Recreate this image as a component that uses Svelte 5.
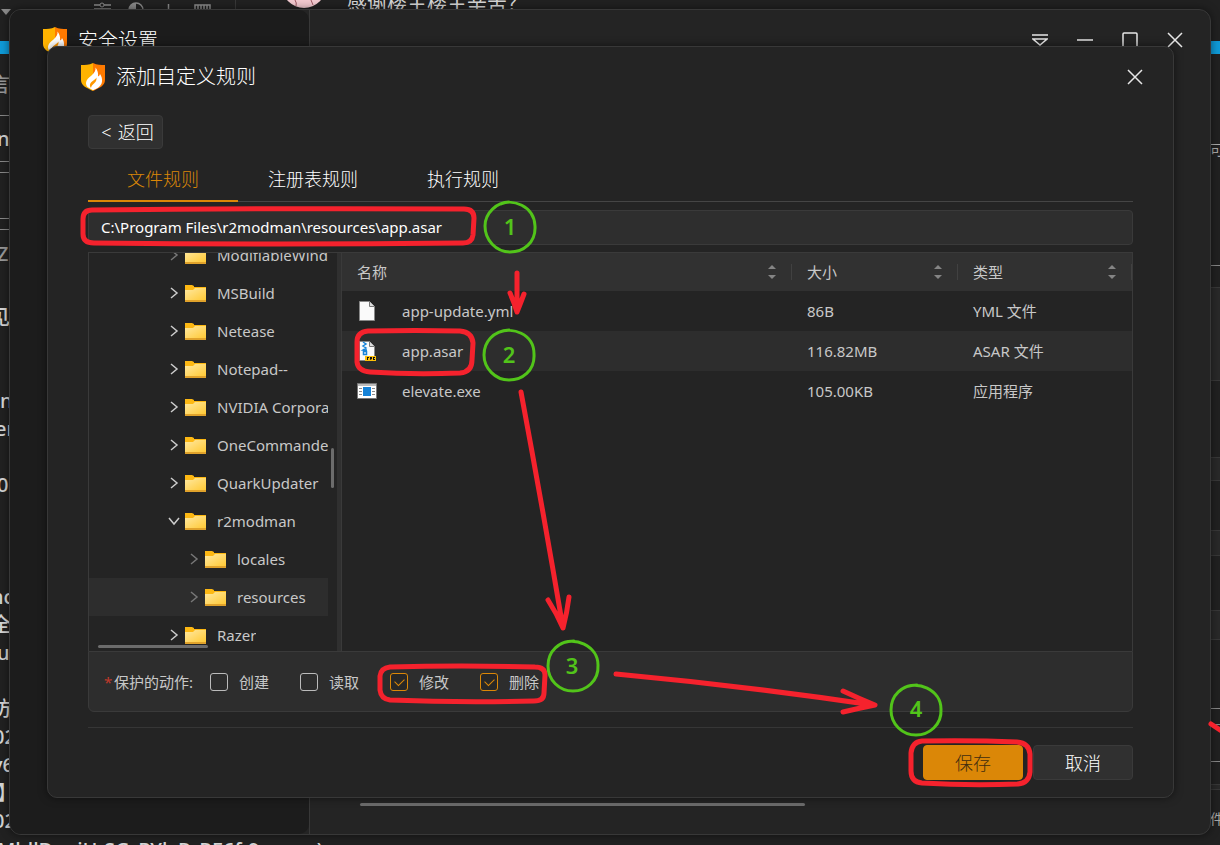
<script lang="ts">
	import { onMount } from 'svelte';

	type TreeNode = { name: string; depth: number; open?: boolean; leaf?: boolean; selected?: boolean };
	type FileRow = { name: string; size: string; type: string; icon: 'file' | 'archive' | 'exe' };

	const tabs = ['文件规则', '注册表规则', '执行规则'];
	const tree: TreeNode[] = [
		{ name: 'ModifiableWindowsApps', depth: 0, leaf: true },
		{ name: 'MSBuild', depth: 0 },
		{ name: 'Netease', depth: 0 },
		{ name: 'Notepad--', depth: 0 },
		{ name: 'NVIDIA Corporation', depth: 0 },
		{ name: 'OneCommander', depth: 0 },
		{ name: 'QuarkUpdater', depth: 0 },
		{ name: 'r2modman', depth: 0, open: true },
		{ name: 'locales', depth: 1, leaf: true },
		{ name: 'resources', depth: 1, leaf: true, selected: true },
		{ name: 'Razer', depth: 0 }
	];
	const columns = ['名称', '大小', '类型'];
	const files: FileRow[] = [
		{ name: 'app-update.yml', size: '86B', type: 'YML 文件', icon: 'file' },
		{ name: 'app.asar', size: '116.82MB', type: 'ASAR 文件', icon: 'archive' },
		{ name: 'elevate.exe', size: '105.00KB', type: '应用程序', icon: 'exe' }
	];

	const leftBits = [
		{ text: '言', y: 85, x: -10, dim: true },
		{ text: 'nu', y: 139, x: -3 },
		{ text: 'Z', y: 254, x: -3, dim: true },
		{ text: '见', y: 318, x: -10 },
		{ text: 'n', y: 401, x: 0 },
		{ text: 'er', y: 429, x: -5 },
		{ text: '0', y: 485, x: -3 },
		{ text: 'nc', y: 597, x: -9 },
		{ text: '全', y: 625, x: -9 },
		{ text: 'u', y: 653, x: -3 },
		{ text: '防', y: 709, x: -9 },
		{ text: '02', y: 737, x: -7 },
		{ text: 'v6', y: 765, x: -8 },
		{ text: '】', y: 793, x: -3 },
		{ text: '02', y: 821, x: -7 }
	];
	const leftLines = [115, 161, 172, 218, 229];
	const rightLines = [265, 708, 724, 761];
	const rightPanels = [
		{ y: 287, h: 94 },
		{ y: 457, h: 24 },
		{ y: 530, h: 26 },
		{ y: 610, h: 30 },
		{ y: 784, h: 6 }
	];

	let activeTab = $state(0);
	let path = $state('C:\\Program Files\\r2modman\\resources\\app.asar');
	let selectedFile = $state('app.asar');
	let actions = $state([
		{ label: '创建', checked: false },
		{ label: '读取', checked: false },
		{ label: '修改', checked: true },
		{ label: '删除', checked: true }
	]);
	let treeEl: HTMLElement;

	onMount(() => {
		treeEl.scrollTop = 17;
	});
</script>

{#snippet logo()}
	<svg class="logo" viewBox="0 0 24 28" aria-hidden="true">
		<path fill="#ffb300" d="M12 0C8 2 4 2 0 2v15c0 6 6 8 12 11Z" />
		<path fill="#ff7a00" d="M12 0c4 2 8 2 12 2v15c0 6-6 8-12 11Z" />
		<path fill="#fff" d="M14.500 4.500c.5 3-1 5-4 8-3 2.500-5.500 4.500-5.500 7.500 0 1.500.5 3 1.500 4l5.500 3.200c4.500-1.800 8.500-4 9-8.700.4-3-.5-5-2-7.500-.5 1.500-1 2-2 2.500.5-3.500-.5-6.500-2.500-9Z" />
		<path fill="#ff9800" d="M15.500 14.500c-1.500 3-5.500 3.500-6.500 7-.3 1.500.3 2.500 1 3.500.2-2 1.500-3 3-4.500 1.800-1.500 2.800-3.500 2.500-6Z" />
	</svg>
{/snippet}

{#snippet cross()}
	<svg class="ctl" viewBox="0 0 16 16" aria-hidden="true"><path d="M1 1l14 14M15 1L1 15" /></svg>
{/snippet}

<div class="desktop">
	<div class="backdrop" aria-hidden="true">
		<svg class="top-icons" width="330" height="20" viewBox="0 0 330 20">
			<path fill="#8a8a8a" d="M1 9h10l-5 6Z" />
			<path stroke="#8a8a8a" stroke-width="1.500" fill="none" d="M94 5h6m4 0h7M94 9h17" />
			<circle cx="102" cy="5" r="2" fill="none" stroke="#8a8a8a" />
			<circle cx="136" cy="10" r="7" fill="none" stroke="#8a8a8a" stroke-width="1.500" />
			<path fill="#8a8a8a" d="M136 3a7 7 0 0 0 0 14Z" />
			<path stroke="#8a8a8a" stroke-width="1.500" d="M168.500 4v8" />
			<path stroke="#8a8a8a" stroke-width="1.500" fill="none" d="M195 10V5h15v5M198 5v4m3-4v4m3-4v4m3-4v4" />
			<path stroke="#383838" d="M235.500 0v10" />
			<circle cx="304" cy="-14" r="22" fill="#f2c9cf" />
			<path stroke="#9c5560" fill="none" d="M295 0q2 3 1 6M311 0l2 5" />
		</svg>
		<span class="bit top-text">感谢楼主楼主辛苦？</span>
		<span class="bar left"></span>
		<span class="bar right"></span>
		{#each leftBits as bit}
			<span class="bit" class:dim={bit.dim} style="left: {bit.x}px; top: {bit.y - 14}px">{bit.text}</span>
		{/each}
		{#each leftLines as y}
			<span class="line left" style="top: {y}px"></span>
		{/each}
		{#each rightLines as y}
			<span class="line right" style="top: {y}px"></span>
		{/each}
		{#each rightPanels as panel}
			<span class="panel" style="top: {panel.y}px; height: {panel.h}px"></span>
		{/each}
		<span class="bit small" style="top: 136px">可选</span>
		<span class="bit small" style="top: 805px">件</span>
		<span class="bit bottom-text">MldlDauiH-SG_PYlyR_RE6f-9gwwn)</span>
	</div>

	<section class="window" aria-label="安全设置">
		<aside class="sidebar">
			<div class="brand">{@render logo()}<span>安全设置</span></div>
		</aside>
		<div class="window-main">
			<div class="window-controls">
				<button type="button" aria-label="菜单">
					<svg class="ctl" viewBox="0 0 16 16" aria-hidden="true"><path d="M0 3h16M1 7h14l-7 6Z" /></svg>
				</button>
				<button type="button" aria-label="最小化">
					<svg class="ctl" viewBox="0 0 16 16" aria-hidden="true"><path d="M0 8h16" /></svg>
				</button>
				<button type="button" aria-label="最大化">
					<svg class="ctl" viewBox="0 0 16 16" aria-hidden="true"><rect x="1" y="1" width="14" height="14" rx="1" /></svg>
				</button>
				<button type="button" aria-label="关闭">{@render cross()}</button>
			</div>
			<div class="window-scroll"></div>
		</div>
	</section>

	<div class="dialog" role="dialog" aria-labelledby="dialog-title">
		<header class="dialog-head">
			{@render logo()}
			<h1 id="dialog-title">添加自定义规则</h1>
			<button type="button" class="close" aria-label="关闭">{@render cross()}</button>
		</header>

		<div class="dialog-body">
			<button type="button" class="btn back"><span>&lt;</span><span>返回</span></button>

			<div class="tabs" role="tablist">
				{#each tabs as tab, i}
					<button type="button" role="tab" class:active={i === activeTab} aria-selected={i === activeTab} onclick={() => (activeTab = i)}>
						{tab}
					</button>
				{/each}
			</div>

			<input class="path" type="text" aria-label="路径" spellcheck="false" bind:value={path} />

			<div class="browser">
				<div class="tree-pane">
					<ul class="tree" bind:this={treeEl}>
						{#each tree as node}
							<li class:selected={node.selected} class:leaf={node.leaf} style="padding-left: {77 + node.depth * 20}px">
								<svg class="caret" viewBox="0 0 16 16" aria-hidden="true">
									<path d={node.open ? 'M3 5l5 6 5-6' : 'M5 3l6 5-6 5'} />
								</svg>
								<svg class="folder" viewBox="0 0 21 17" aria-hidden="true">
									<path fill="#fdb813" d="M0 0h7l2 1v1h12v4H0Z" />
									<path fill="url(#folder-face)" d="M0 5h8l2-2h11v12H0Z" />
									<path fill="#e0a22b" d="M0 15h21v2H0Z" />
								</svg>
								<span class="node-name">{node.name}</span>
							</li>
						{/each}
					</ul>
					<i class="thumb-y"></i>
					<i class="thumb-x"></i>
				</div>
				<div class="splitter"></div>
				<div class="list-pane">
					<table>
						<thead>
							<tr>
								{#each columns as column}
									<th scope="col">
										<div class="th">
											{column}
											<svg class="sort" viewBox="0 0 8 14" aria-hidden="true"><path d="M0 4l4-4 4 4ZM0 10l4 4 4-4Z" /></svg>
										</div>
									</th>
								{/each}
							</tr>
						</thead>
						<tbody>
							{#each files as file}
								<tr class:selected={file.name === selectedFile} onclick={() => (selectedFile = file.name)}>
									<td>
										<div class="name">
											<svg class="file-icon" viewBox="0 0 20 20" aria-hidden="true">
												{#if file.icon === 'exe'}
													<path fill="#fff" stroke="#777" d="M.5 2.500h19v15H.5Z" />
													<path fill="#bbb" d="M1 3h18v2H1Z" />
													<path fill="#1683d8" d="M6 6h8v9H6Z" />
													<path stroke="#8a8a8a" d="M2 7.500h3m-3 3h3m-3 3h3m10-6h3m-3 3h3m-3 3h3" />
												{:else}
													<path fill="#fafafa" stroke="#888" d="M2.500.5h10l5 5v14h-15Z" />
													<path fill="#ddd" stroke="#777" d="M12.500.5v5h5" />
												{/if}
												{#if file.icon === 'archive'}
													<path stroke="#1683d8" fill="none" stroke-width="1.500" d="M6 1l3 2-3 2 3 2-3 2h4M6.500 10.500h3v3h-3Z" />
													<path fill="#ffc107" d="M8 15h11v5H8Z" />
													<path fill="#111" d="M10 16h2v1h-1v2h-1ZM13 16h2v2l-2 1ZM16 16h2v1h-1v1h1v1h-2Z" />
												{/if}
											</svg>
											{file.name}
										</div>
									</td>
									<td>{file.size}</td>
									<td>{file.type}</td>
								</tr>
							{/each}
						</tbody>
					</table>
				</div>
			</div>

			<div class="actions">
				<span class="star">*</span>
				<span class="actions-label">保护的动作:</span>
				{#each actions as action}
					<label>
						<input type="checkbox" bind:checked={action.checked} />
						{action.label}
					</label>
				{/each}
			</div>

			<footer>
				<button type="button" class="btn primary">保存</button>
				<button type="button" class="btn">取消</button>
			</footer>
		</div>
	</div>

	<svg class="notes" width="1220" height="845" viewBox="0 0 1220 845" aria-hidden="true">
		<defs>
			<linearGradient id="folder-face" x1="0" y1="0" x2="1" y2="1">
				<stop offset="0" stop-color="#ffe9a2" />
				<stop offset="1" stop-color="#ffc935" />
			</linearGradient>
		</defs>
		<g class="red">
			<path d="M92 210Q280 208 464 209q10 0 10 9l-1 17q-1 8-10 8Q280 245 94 243q-11 0-11-9v-15q0-9 9-9Z" />
			<path d="M368 331q48-1 92 0 12 1 13 12l-1 17q0 12-12 13-46 2-90-1-12-1-13-10v-20q0-10 11-11Z" />
			<path d="M390 667q70-2 145 0 10 0 10 8l-1 18q0 8-10 8-72 2-144-1-9-1-10-10v-14q1-8 10-9Z" />
			<path d="M922 741q50-1 95 1 12 1 13 12v18q-1 11-12 12-48 2-96-1-11-1-11-12v-18q1-11 11-12Z" />
			<path d="M517 273v37M510 293q4 9 7 19 4-10 7-18" />
			<path d="M521 392q22 118 42 236M548 600q9 14 15 28 4-15 6-31" />
			<path d="M616 674Q745 686 873 705M843 691q17 8 32 14-15 3-32 7" />
			<path d="M1211 724l9 6" />
		</g>
		<g class="green">
			<path d="M501 204C512 199 534 205 535 226C536 243 523 252 510 252C496 252 485 240 485 226C485 213 497 202 509 202" />
			<path d="M500 332C511 327 534 333 534 354C535 371 522 380 509 380C495 380 484 368 484 355C484 342 493 331 509 330" />
			<path d="M559 645C574 635 598 646 598 665C599 681 586 691 573 691C559 691 548 680 548 666C548 651 559 641 574 641" />
			<path d="M902 689C917 679 941 690 941 709C942 725 929 735 916 735C902 735 891 724 891 710C891 695 902 685 917 685" />
		</g>
		<g class="digits">
			<text x="510" y="235">1</text>
			<text x="509" y="363">2</text>
			<text x="572" y="674">3</text>
			<text x="916" y="717">4</text>
		</g>
	</svg>
</div>

<style>
	:global(body) { background: #212121; }
	.desktop { position: relative; height: 100vh; overflow: hidden; background: #212121; color: #c8c8c8; font: 15px/20px 'Noto Sans', 'Noto Sans CJK SC', sans-serif; }
	.desktop * { box-sizing: border-box; }
	button { font: inherit; color: inherit; cursor: pointer; }
	svg { flex: none; display: block; }

	.backdrop { position: absolute; inset: 0; overflow: hidden; }
	.backdrop > * { position: absolute; }
	.top-icons { top: 0; left: 0; }
	.bit { font-size: 20px; font-weight: 500; line-height: 28px; color: #d5d5d5; white-space: nowrap; }
	.bit.dim { color: #999; }
	.bit.small { right: -16px; width: 26px; overflow: hidden; font-size: 14px; font-weight: 400; color: #aaa; }
	.top-text { left: 347px; top: -10px; font-weight: 400; }
	.bottom-text { left: -3px; bottom: -19px; }
	.bar { top: 41px; width: 12px; height: 13px; background: #0f9bd8; }
	.line { width: 12px; height: 1px; background: #888; }
	.panel { right: 0; width: 12px; background: #292929; border: solid #383838; border-width: 1px 0; }
	.left { left: 0; }
	.right { right: 0; }

	.window { position: absolute; inset: 9px 9px 10px 9px; display: flex; background: #242424; border: 1px solid #383838; border-radius: 12px; box-shadow: 0 0 8px rgba(0, 0, 0, 0.5); overflow: hidden; }
	.sidebar { width: 299px; flex: none; background: #1c1c1c; border-radius: 0 10px 10px 0; }
	.brand { display: flex; align-items: center; gap: 11px; height: 62px; padding-left: 33px; font-size: 20px; color: #fff; }
	.logo { width: 24px; height: 28px; }
	.window-main { flex: 1; display: flex; flex-direction: column; justify-content: space-between; border-left: 1px solid #383838; }
	.window-controls { display: flex; justify-content: flex-end; gap: 13px; padding: 14px 19px 0; }
	.window-controls button, .close { display: grid; place-items: center; width: 32px; height: 32px; padding: 0; border: 0; background: none; }
	.ctl { width: 16px; height: 16px; fill: none; stroke: #e6e6e6; stroke-width: 1.500; }
	.window-scroll { width: 445px; height: 3px; margin: 0 0 28px 50px; border-radius: 2px; background: #6c6c6c; }

	.dialog { position: absolute; inset: 46px 46px 47px 47px; display: flex; flex-direction: column; background: #242424; border: 1px solid #383838; border-radius: 10px; box-shadow: 0 0 8px rgba(0, 0, 0, 0.5); }
	.dialog-head { display: flex; align-items: center; gap: 11px; height: 60px; padding: 0 22px 0 33px; }
	.dialog-head h1 { flex: 1; margin: 0; font-size: 20px; font-weight: 300; line-height: 28px; color: #fff; }
	.brand { font-weight: 300; }
	.dialog-body { flex: 1; display: flex; flex-direction: column; min-height: 0; padding: 8px 40px 17px; }

	.btn { width: 100px; height: 35px; padding: 0; border: 1px solid #3a3a3a; border-radius: 4px; background: #303030; color: #fff; font-size: 18px; font-weight: 300; line-height: 24px; }
	.btn.primary { border-color: #db8707; background: #db8707; color: #3f2c10; }
	.btn.back { flex: none; display: flex; align-items: center; justify-content: center; gap: 6px; width: 75px; height: 34px; padding-left: 4px; }

	.tabs { flex: none; display: flex; height: 53px; border-bottom: 1px solid #454545; }
	.tabs button { width: 150px; height: 53px; padding: 8px 0 0; border: 0; border-bottom: 2px solid transparent; background: none; color: #fff; font-size: 18px; font-weight: 300; }
	.tabs button.active { border-color: #db8707; color: #db8707; }
	.path { flex: none; width: 100%; height: 35px; margin: 8px 0 7px; padding: 0 12px 2px; border: 1px solid #3a3a3a; border-radius: 4px; outline: 0; background: #2e2e2e; color: #fff; font: inherit; }

	.browser { flex: 1; display: flex; min-height: 0; border: solid #3a3a3a; border-width: 1px 1px 0; }
	.tree-pane { position: relative; width: 248px; padding-right: 9px; overflow: hidden; }
	.tree { height: 100%; margin: 0; padding: 0; overflow: hidden; list-style: none; }
	.tree li { display: flex; align-items: center; height: 38px; white-space: nowrap; overflow: hidden; }
	.tree li.selected { background: #2d2d2d; }
	.node-name { min-width: 0; overflow: hidden; }
	.caret { width: 16px; height: 16px; fill: none; stroke: #ccc; stroke-width: 1.500; }
	.leaf .caret { stroke: #777; }
	.folder { width: 21px; height: 17px; margin: 0 11px 0 3px; }
	.thumb-y, .thumb-x { position: absolute; border-radius: 2px; background: #6c6c6c; }
	.thumb-y { right: 3px; top: 195px; width: 3px; height: 40px; }
	.thumb-x { left: 9px; bottom: 3px; width: 110px; height: 3px; }
	.splitter { width: 5px; background: #303030; border-right: 1px solid #3a3a3a; }

	.list-pane { flex: 1; }
	table { width: 100%; table-layout: fixed; border-collapse: collapse; }
	th { height: 38px; padding: 0; background: #313131; font-weight: 400; text-align: left; }
	th:nth-child(2) { width: 166px; }
	th:nth-child(3) { width: 174px; }
	.th { display: flex; align-items: center; justify-content: space-between; height: 16px; padding: 0 15px; border-right: 1px solid #414141; }
	.sort { width: 8px; height: 14px; fill: #858585; }
	td { height: 40px; padding: 0 15px; }
	tr.selected td { background: #2d2d2d; }
	.name { display: flex; align-items: center; gap: 25px; }
	.file-icon { width: 20px; height: 20px; }

	.actions { flex: none; display: flex; align-items: center; height: 61px; padding-left: 15px; border: 1px solid #3a3a3a; border-radius: 0 0 6px 6px; background: #2d2d2d; }
	.star { width: 10px; color: #c0392b; }
	.actions-label { width: 96px; }
	.actions label { display: flex; align-items: center; gap: 11px; width: 90px; }
	.actions input { appearance: none; display: grid; place-items: center; width: 18px; height: 18px; margin: 0; border: 1px solid #bbb; border-radius: 3px; }
	.actions input:checked { border-color: #db8707; background: #272727; }
	.actions input:checked::after { content: ''; width: 8px; height: 5px; border: solid #db8707; border-width: 0 0 1px 1px; transform: translateY(-1px) rotate(-45deg); }

	footer { flex: none; display: flex; justify-content: flex-end; gap: 10px; margin-top: 15px; padding-top: 17px; border-top: 1px solid #363636; }

	.notes { position: absolute; top: 0; left: 0; pointer-events: none; }
	.red, .green { fill: none; stroke-linecap: round; stroke-linejoin: round; }
	.red { stroke: #f5222d; stroke-width: 5; }
	.green { stroke: #52c41a; stroke-width: 3; }
	.digits { fill: #52c41a; font-size: 22px; font-weight: 600; text-anchor: middle; }
</style>
